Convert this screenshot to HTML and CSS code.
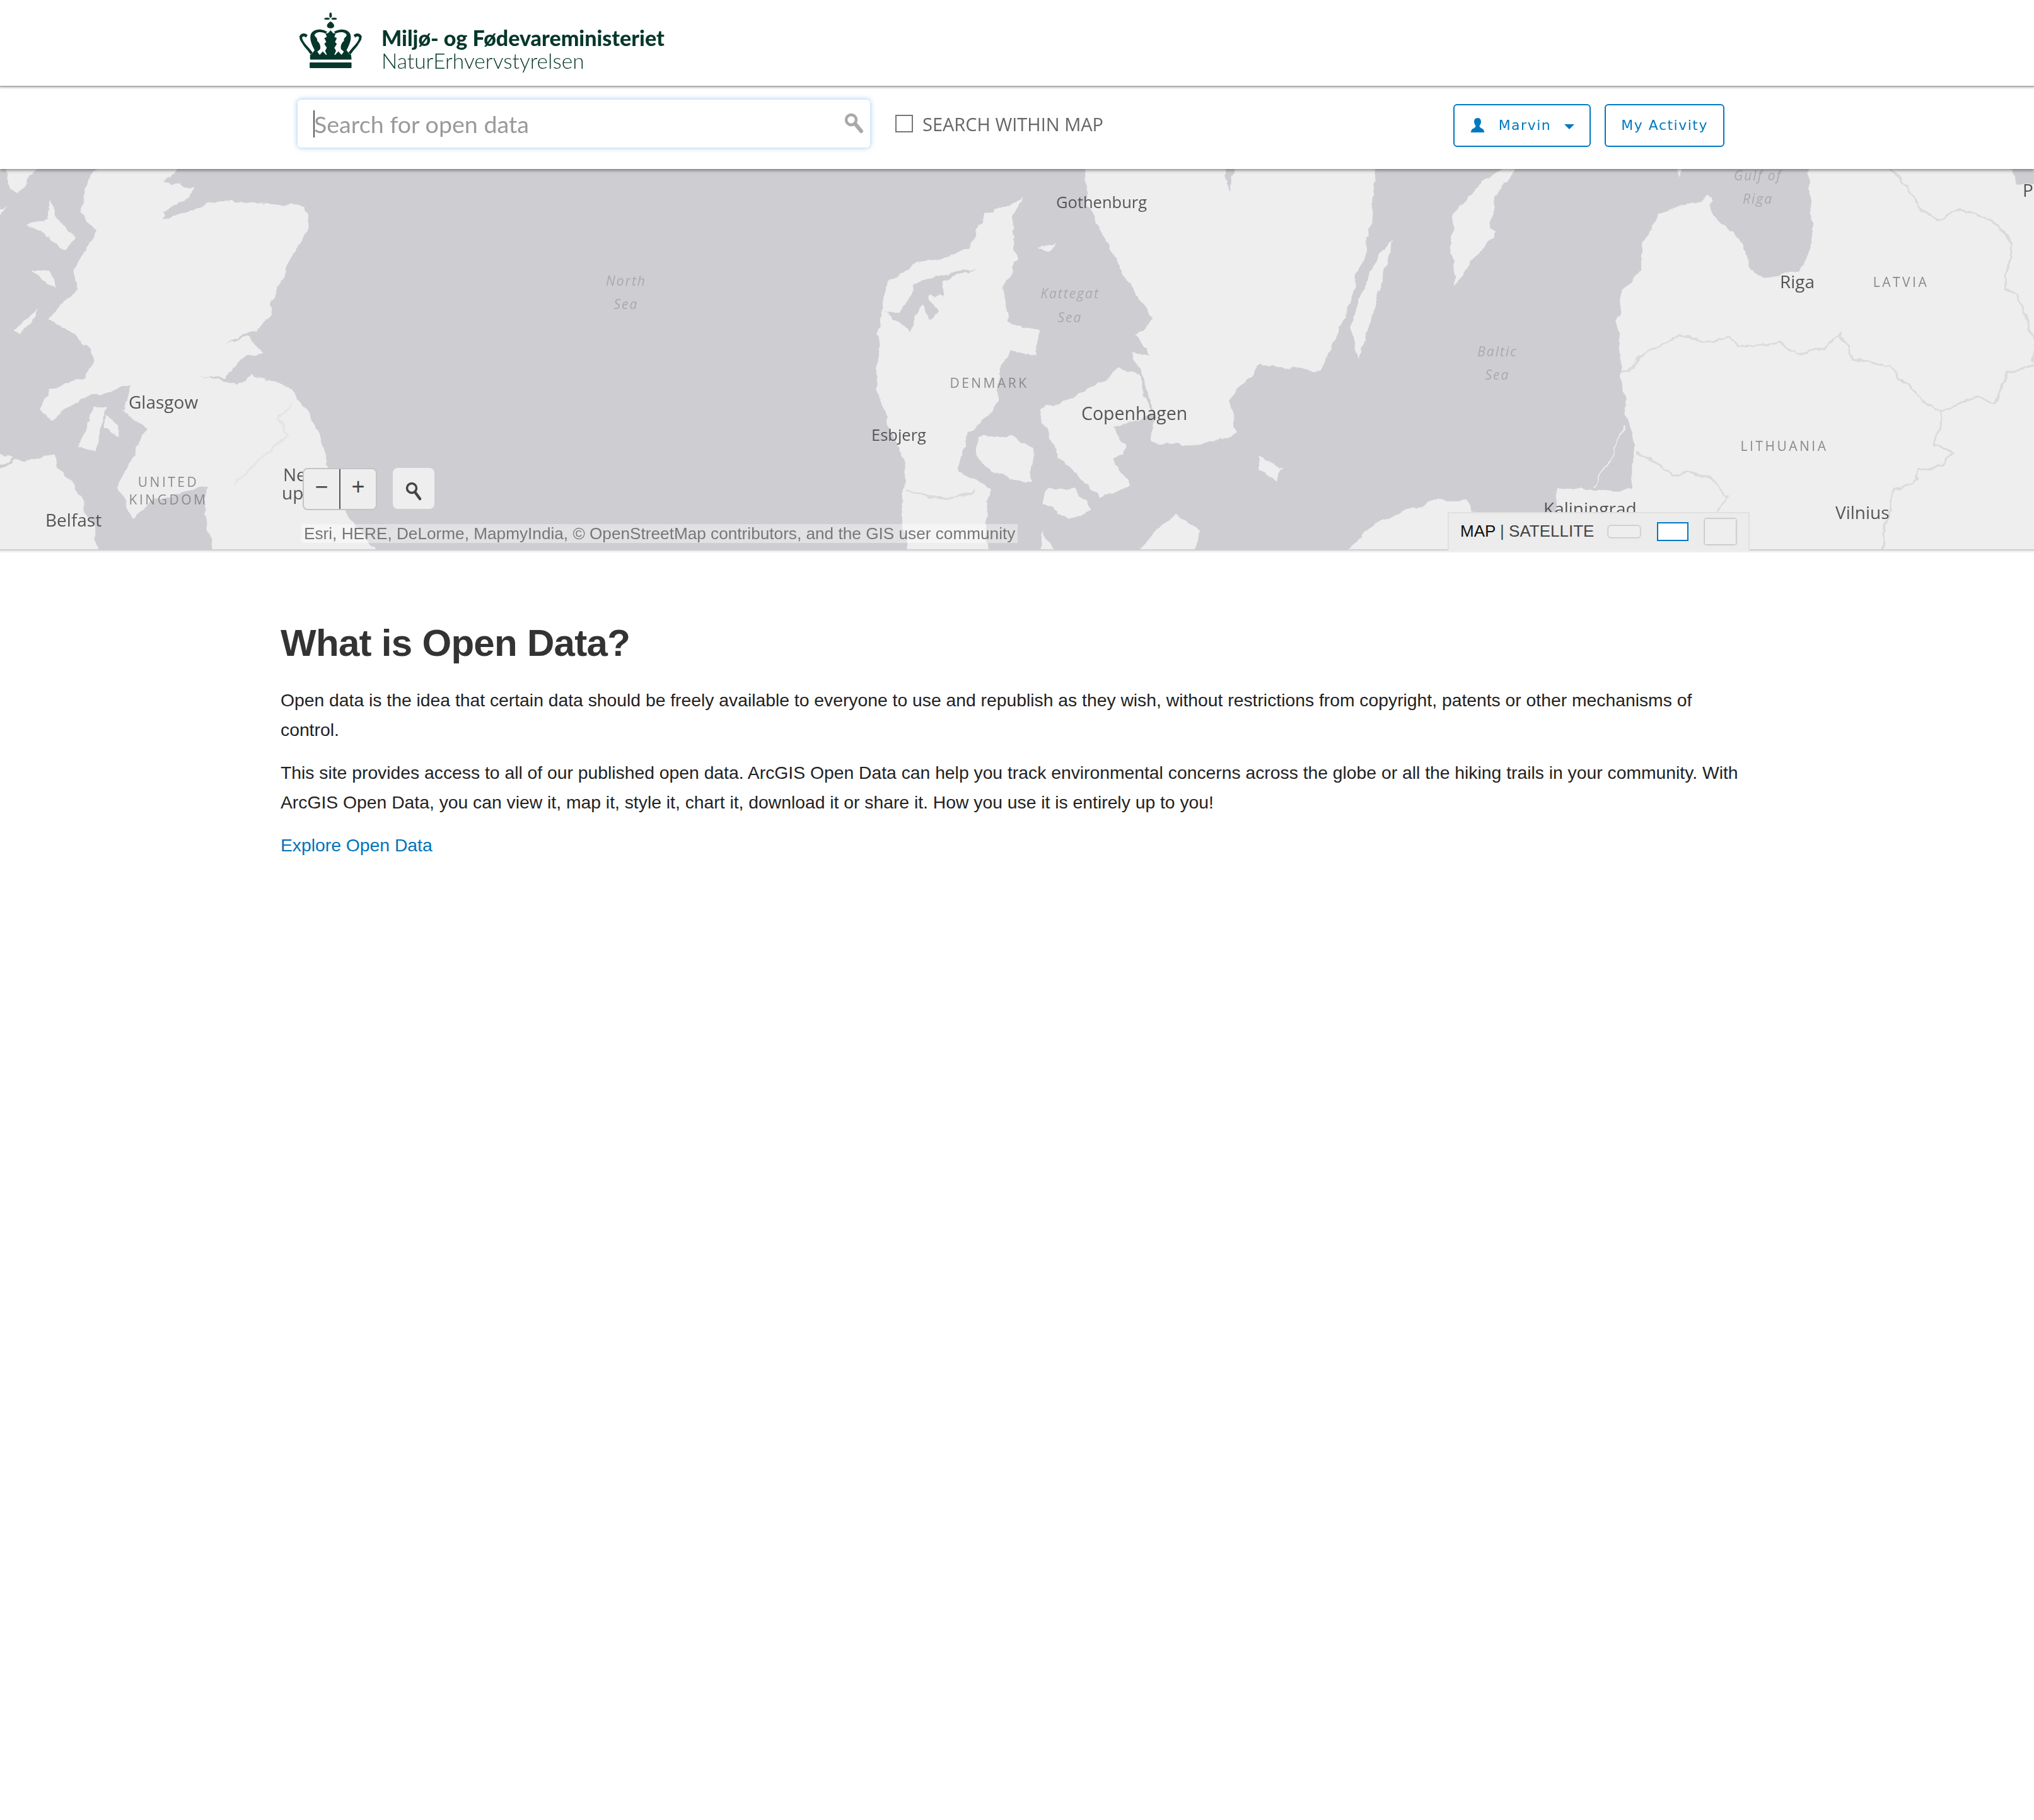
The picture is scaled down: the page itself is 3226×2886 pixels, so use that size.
FILE: index.html
```html
<!DOCTYPE html>
<html>
<head>
    <title>What is Open Data?</title>
    <link rel="stylesheet" href="styles.css">
</head>
<body>
    <header class="brand-bar">
        <svg class="crown" viewBox="72 30 298 265">
            <g class="crown-fill">
                <ellipse cx="222" cy="42" rx="6" ry="13"/>
                <ellipse cx="205" cy="59" rx="13" ry="5"/>
                <ellipse cx="239" cy="59" rx="13" ry="5"/>
                <path d="M222 72 C212 78 204 86 205 94 C206 102 214 105 222 105 C230 105 238 102 239 94 C240 86 232 78 222 72Z"/>
                <path d="M222 114 L234 128 L246 130 L240 146 L252 152 L243 170 L252 180 L240 198 L248 212 L240 232 L204 232 L196 212 L204 198 L192 180 L201 170 L192 152 L204 146 L198 130 L210 128Z"/>
                <rect x="122" y="268" width="200" height="27" rx="4"/>
                <path d="M124 254 L124 232 L320 232 L322 254Z"/>
                <path d="M128 232 L150 205 L170 232Z M316 232 L294 205 L274 232Z M170 232 L185 215 L200 232Z M274 232 L259 215 L244 232Z"/>
                <path d="M128 232 L112 210 L95 190 L76 160 L73 145 C76 130 100 122 112 138 L104 150 C98 142 88 142 86 150 C88 170 112 190 136 220Z"/>
                <path d="M316 232 L332 210 L349 190 L368 160 L371 145 C368 130 344 122 332 138 L340 150 C346 142 356 142 358 150 C356 170 332 190 308 220Z"/>
                <path d="M152 222 C136 190 122 165 126 140 C130 112 170 100 206 122 L198 130 C176 118 150 122 145 138 C150 150 160 150 158 165 C170 175 176 190 172 205Z"/>
                <path d="M292 222 C308 190 322 165 318 140 C314 112 274 100 238 122 L246 130 C268 118 294 122 299 138 C294 150 284 150 286 165 C274 175 268 190 272 205Z"/>
            </g>
        </svg>
        <div class="brand-text">
            <div class="ministry">Miljø- og Fødevareministeriet</div>
            <div class="agency">NaturErhvervstyrelsen</div>
        </div>
    </header>

    <div class="toolbar">
        <div class="search-box">
            <span class="caret"></span>
            <span class="placeholder">Search for open data</span>
            <svg class="search-icon" viewBox="0 0 30 32">
                <circle cx="11" cy="11" r="8" fill="none" stroke="#a9a9a9" stroke-width="4.5"/>
                <path d="M17 17 L27 29" stroke="#a9a9a9" stroke-width="6" stroke-linecap="round"/>
            </svg>
        </div>
        <label class="within-map"><span class="checkbox"></span>SEARCH WITHIN MAP</label>
        <div class="actions">
            <a class="btn btn-user">
                <svg class="user-icon" viewBox="0 0 25 23">
                    <path d="M12.5 0 C8.5 0 7 3 7 6 C7 9 8.5 11 9.5 12.5 C9.5 15 7 16 3.5 18 L1.5 23 L23.5 23 L21.5 18 C18 16 15.5 15 15.5 12.5 C16.5 11 18 9 18 6 C18 3 16.5 0 12.5 0Z" fill="#0079c1"/>
                </svg>
                Marvin
                <span class="down-caret"></span>
            </a>
            <a class="btn">My Activity</a>
        </div>
    </div>

    <section class="map">
        <svg class="basemap" viewBox="0 0 3226 603">
            <defs>
                <filter id="coast" filterUnits="userSpaceOnUse" x="0" y="0" width="3226" height="603">
                    <feTurbulence type="fractalNoise" baseFrequency="0.045" numOctaves="3" seed="7" result="noise"/>
                    <feDisplacementMap in="SourceGraphic" in2="noise" scale="13" xChannelSelector="R" yChannelSelector="G"/>
                    <feGaussianBlur stdDeviation="0.7"/>
                </filter>
            </defs>
            <g filter="url(#coast)">
                <!-- scotland, n. ireland -->
                <g class="land" transform="translate(0,-7) scale(0.7015,0.3954)">
                    <path d="M420 -20 L370 70 L440 90 L430 130 L370 190 L365 220 L410 200 L480 150 L560 150 L690 170 L700 250 L650 400 L615 560 L610 610 L570 670 L510 715 L560 690 L595 750 L540 790 L510 860 L450 840 L540 885 L570 840 L660 900 L700 1010 L730 1120 L740 1200 L790 1420 L880 1600 L490 1600 L460 1400 L470 1290 L350 1340 L300 1420 L265 1290 L300 1170 L330 1060 L280 990 L295 890 L240 910 L170 950 L120 1030 L90 980 L110 900 L190 860 L210 800 L200 740 L160 670 L110 620 L140 560 L180 500 L170 430 L190 350 L215 270 L180 190 L190 120 L200 60 L240 -20Z"/>
                    <path d="M-20 1240 L30 1190 L120 1170 L150 1250 L190 1350 L190 1400 L210 1440 L230 1600 L-20 1600Z"/>
                    <path d="M-20 1150 L30 1180 L-20 1215Z"/>
                    <path d="M20 -20 L100 -20 L40 120 L15 80Z"/>
                    <path d="M110 150 L135 220 L170 300 L150 340 L60 240 L110 220Z"/>
                    <path d="M-20 180 L15 170 L-20 250Z"/>
                    <path d="M75 425 L110 425 L130 490 L100 470Z"/>
                    <path d="M30 660 L90 580 L80 620 L40 680Z"/>
                    <path d="M180 1130 L210 970 L240 980 L215 1150Z"/>
                    <path d="M240 1000 L270 1050 L270 1090 L235 1060Z"/>
                </g>
                <!-- denmark, sweden -->
                <g transform="translate(1100,-7) scale(0.7015,0.3954)">
                    <g class="land">
                        <path d="M745 130 L660 200 L620 330 L560 385 L500 400 L440 470 L420 640 L415 900 L440 1040 L480 1200 L470 1400 L490 1600 L670 1600 L660 1420 L670 1300 L600 1230 L620 1070 L640 1050 L690 950 L690 820 L720 745 L770 770 L785 670 L710 630 L700 500 L730 380 L720 220Z"/>
                        <path d="M640 1090 L720 1090 L770 1130 L760 1280 L680 1240 L640 1170Z"/>
                        <path d="M830 950 L930 870 L960 810 L1005 840 L1020 930 L1040 1000 L950 1060 L980 1130 L950 1190 L990 1280 L920 1340 L820 1160 L780 980Z"/>
                        <path d="M800 1300 L860 1300 L900 1380 L850 1420 L790 1350Z"/>
                        <path d="M890 -20 L1200 -20 L1210 110 L1230 -20 L1510 -20 L1535 180 L1530 280 L1470 620 L1420 830 L1280 800 L1210 950 L1230 1080 L1110 1130 L1035 1110 L1045 1000 L990 750 L1030 760 L1000 680 L1040 620 L1000 520 L940 340 L890 150Z"/>
                        <path d="M1280 1160 L1330 1220 L1320 1270 L1275 1230Z"/>
                        <path d="M780 330 L820 310 L800 350Z"/>
                        <path d="M790 1470 L830 1600 L970 1600 L1090 1400 L1140 1470 L1130 1600 L780 1600Z"/>
                        <path d="M1440 1600 L1568 1430 L1568 1600Z"/>
                    </g>
                    <path class="water" d="M430 590 L470 600 L490 540 L500 480 L550 440 L640 415 L560 465 L565 520 L530 530 L555 590 L530 625 L520 560 L495 610 L495 670 L470 640Z"/>
                    <path class="border" d="M480 1310 L570 1340 L640 1310"/>
                </g>
                <!-- baltic states -->
                <g transform="translate(2126,-7) scale(0.7015,0.3954)">
                    <g class="land">
                        <path d="M1060 -20 L1060 80 L1070 320 L1040 420 L970 460 L920 410 L910 310 L840 200 L835 125 L720 200 L680 320 L680 420 L635 520 L625 650 L635 830 L645 990 L660 1100 L665 1190 L655 1300 L600 1310 L490 1290 L490 1400 L300 1400 L285 1340 L200 1350 L80 1440 L-20 1600 L1600 1600 L1600 80 L1530 80 L1510 -20Z"/>
                        <path d="M330 50 L410 -20 L350 130 L340 250 L355 270 L290 400 L260 485 L250 300 L255 200Z"/>
                        <path d="M120 300 L90 500 L40 780 L20 650 L50 500 L90 350Z"/>
                        <path d="M-20 -20 L80 -20 L70 230 L-20 680Z"/>
                        <path d="M750 -20 L780 -20 L765 55Z"/>
                    </g>
                    <path class="spit" d="M640 1050 C630 1130 600 1220 570 1290"/>
                    <path class="border" d="M635 830 L660 820 L680 760 L765 685 L840 710 L880 695 L900 735 L990 715 L1035 760 L1090 740 L1130 680 L1160 780 L1240 810 L1310 940 L1360 995 L1430 930 L1480 950 L1510 830 L1600 790"/>
                    <path class="border" d="M670 1150 L750 1240 L830 1245 L870 1330 L855 1390"/>
                    <path class="border" d="M1360 995 L1345 1130 L1385 1150 L1360 1210 L1310 1220 L1300 1280 L1250 1300 L1240 1400 L1220 1600"/>
                    <path class="border" d="M1220 -20 L1280 90 L1310 180 L1350 225 L1400 180 L1470 220 L1520 320 L1500 500 L1530 520 L1568 690 L1568 790"/>
                </g>
                <g transform="scale(0.7015,0.3954) translate(0,-18)">
                    <path class="border faint" d="M660 950 L630 1020 L650 1080 L600 1160 L530 1280"/>
                </g>
            </g>

            <text class="city small" x="1675" y="62">Gothenburg</text>
            <text class="city big" x="1715" y="398">Copenhagen</text>
            <text class="city small" x="1382" y="431">Esbjerg</text>
            <text class="city" x="204" y="380">Glasgow</text>
            <text class="city" x="72" y="567">Belfast</text>
            <text class="city" x="2823" y="189">Riga</text>
            <text class="city" x="2911" y="555">Vilnius</text>
            <text class="city" x="2448" y="549">Kaliningrad</text>
            <text class="city" x="3208" y="44">Pa</text>
            <text class="city" x="449" y="495">Ne</text>
            <text class="city" x="447" y="524">up</text>
            <text class="country" x="3015" y="187">LATVIA</text>
            <text class="country" x="2830" y="447">LITHUANIA</text>
            <text class="country" x="1569" y="347">DENMARK</text>
            <text class="country" x="267" y="504">UNITED</text>
            <text class="country" x="267" y="532">KINGDOM</text>
            <text class="sea" x="993" y="185">North</text>
            <text class="sea" x="993" y="222">Sea</text>
            <text class="sea" x="1697" y="205">Kattegat</text>
            <text class="sea" x="1697" y="243">Sea</text>
            <text class="sea" x="2375" y="297">Baltic</text>
            <text class="sea" x="2375" y="334">Sea</text>
            <text class="sea" x="2788" y="18">Gulf of</text>
            <text class="sea" x="2788" y="55">Riga</text>
        </svg>

        <div class="zoom-group">
            <button class="map-btn">−</button>
            <button class="map-btn">+</button>
        </div>
        <button class="locate-btn">
            <svg viewBox="0 0 26 30">
                <circle cx="10" cy="10" r="7.5" fill="none" stroke="#444" stroke-width="3.5"/>
                <path d="M15 16 L23 27" stroke="#444" stroke-width="4.5" stroke-linecap="round"/>
            </svg>
        </button>
        <div class="attribution">Esri, HERE, DeLorme, MapmyIndia, © OpenStreetMap contributors, and the GIS user community</div>

        <div class="layers">
            <span class="layer-text"><span class="layer-active">MAP</span> | SATELLITE</span>
            <span class="thumb thumb-a"></span>
            <span class="thumb thumb-b"></span>
            <span class="thumb thumb-c"></span>
        </div>
    </section>

    <main class="intro">
        <h1>What is Open Data?</h1>
        <p>Open data is the idea that certain data should be freely available to everyone to use and republish as they wish, without restrictions from copyright, patents or other mechanisms of control.</p>
        <p>This site provides access to all of our published open data. ArcGIS Open Data can help you track environmental concerns across the globe or all the hiking trails in your community. With ArcGIS Open Data, you can view it, map it, style it, chart it, download it or share it. How you use it is entirely up to you!</p>
        <p><a href="#">Explore Open Data</a></p>
    </main>
</body>
</html>
```

FILE: styles.css
```css
html {
    background-color: #ffffff;
}

body {
    margin: 0;
    font-family: "Liberation Sans", Arial, sans-serif;
    color: #222222;
    background-color: #ffffff;
}

/* top bar */
.brand-bar {
    position: relative;
    z-index: 3;
    display: flex;
    align-items: flex-start;
    box-sizing: border-box;
    height: 138px;
    padding: 20px 0 0 473px;
    border-bottom: 2px solid #b0b0b0;
    background-color: #ffffff;
    box-shadow: 0 1px 3px rgba(0, 0, 0, 0.25);
}

.crown {
    width: 102px;
    height: 88px;
}

.crown-fill {
    fill: #06372b;
}

.brand-text {
    margin-left: 30px;
    padding-top: 21px;
    color: #06372b;
    font-family: Lato, sans-serif;
}

.ministry {
    font-size: 34px;
    line-height: 38px;
    font-weight: 900;
}

.agency {
    font-size: 33.5px;
    line-height: 34px;
    font-weight: 300;
}

.toolbar {
    position: relative;
    z-index: 2;
    display: flex;
    align-items: center;
    box-sizing: border-box;
    height: 130px;
    padding: 0 491px 14px 472px;
    background-color: #ffffff;
    box-shadow: 0 2px 5px rgba(0, 0, 0, 0.45);
}

.search-box {
    position: relative;
    display: flex;
    align-items: center;
    box-sizing: border-box;
    width: 908px;
    height: 76px;
    padding-left: 25px;
    background-color: #ffffff;
    border-radius: 6px;
    box-shadow: 0 0 9px rgba(102, 175, 233, 0.7);
}

.caret {
    width: 2px;
    height: 43px;
    background-color: #555555;
}

.placeholder {
    margin-left: -1px;
    font-family: Lato, sans-serif;
    font-size: 37.6px;
    color: #9a9a9a;
}

.search-icon {
    position: absolute;
    right: 11px;
    top: 21px;
    width: 30px;
    height: 32px;
}

.within-map {
    display: flex;
    align-items: center;
    margin-left: 40px;
    font-family: "Open Sans", sans-serif;
    font-size: 29px;
    color: #666666;
}

.checkbox {
    box-sizing: border-box;
    width: 28px;
    height: 28px;
    margin-right: 15px;
    border: 2px solid #777777;
}

.actions {
    display: flex;
    gap: 22px;
    margin-top: 5px;
    margin-left: auto;
}

.btn {
    display: flex;
    align-items: center;
    box-sizing: border-box;
    height: 68px;
    padding: 0 24px;
    border: 2px solid #0079c1;
    border-radius: 6px;
    font-family: "DejaVu Sans", sans-serif;
    font-size: 22px;
    letter-spacing: 1.5px;
    color: #0079c1;
}

.user-icon {
    width: 25px;
    height: 23px;
    margin-right: 21px;
}

.down-caret {
    width: 0;
    height: 0;
    margin-left: 21px;
    margin-top: 4px;
    border-left: 8px solid transparent;
    border-right: 8px solid transparent;
    border-top: 8px solid #0079c1;
}

/* map */
.map {
    position: relative;
    height: 605px;
    border-bottom: 3px solid #efefef;
    background-color: #cecdd2;
    overflow: hidden;
}

.basemap {
    display: block;
    width: 3226px;
    height: 603px;
}

.land path {
    fill: #eeeeee;
}

.water {
    fill: #cecdd2;
}

.border {
    fill: none;
    stroke: #dadada;
    stroke-width: 3px;
    vector-effect: non-scaling-stroke;
}

.border.faint {
    stroke: #e4e4e4;
}

.spit {
    fill: none;
    stroke: #eeeeee;
    stroke-width: 2px;
    vector-effect: non-scaling-stroke;
}

.city {
    font-family: "Open Sans", sans-serif;
    font-size: 28px;
    fill: #555555;
}

.city.small {
    font-size: 25.5px;
}

.city.big {
    font-size: 28.5px;
}

.country {
    font-family: "Open Sans", sans-serif;
    font-size: 21px;
    letter-spacing: 3.5px;
    text-anchor: middle;
    fill: #8a8a8a;
}

.sea {
    font-family: "Open Sans", sans-serif;
    font-size: 21px;
    font-style: italic;
    letter-spacing: 2px;
    text-anchor: middle;
    fill: #a9a9ae;
}

.zoom-group {
    position: absolute;
    left: 480px;
    top: 474px;
    display: flex;
    box-sizing: border-box;
    width: 118px;
    height: 67px;
    border: 2px solid #c4c4c4;
    border-radius: 8px;
    background-color: #eeeeee;
}

.map-btn {
    flex: 1;
    padding: 0 0 8px;
    border: 0;
    background: none;
    font-family: "Liberation Sans", sans-serif;
    font-size: 36px;
    color: #444444;
}

.map-btn + .map-btn {
    border-left: 2px solid #555555;
}

.locate-btn {
    position: absolute;
    left: 623px;
    top: 474px;
    width: 66px;
    height: 65px;
    padding: 21px 20px 12px;
    border: 0;
    border-radius: 8px;
    background-color: #eeeeee;
}

.locate-btn svg {
    display: block;
    width: 26px;
    height: 30px;
}

.attribution {
    position: absolute;
    left: 478px;
    top: 563px;
    height: 30px;
    padding: 0 4px;
    background-color: rgba(255, 255, 255, 0.4);
    font-size: 26.2px;
    line-height: 30px;
    color: #777777;
}

.layers {
    position: absolute;
    left: 2296px;
    top: 544px;
    display: flex;
    align-items: center;
    box-sizing: border-box;
    width: 479px;
    height: 62px;
    padding: 0 0 3px 18px;
    border: 2px solid #e0e0e0;
    border-bottom: 0;
    background-color: #ececec;
}

.layer-text {
    width: 235px;
    font-size: 26px;
    color: #444444;
}

.layer-active {
    color: #111111;
}

.thumb {
    box-sizing: border-box;
    flex: none;
}

.thumb-a {
    width: 50px;
    height: 18px;
    border-radius: 4px;
    background-color: #eeeeee;
    box-shadow: 0 0 3px rgba(0, 0, 0, 0.45);
}

.thumb-b {
    width: 50px;
    height: 30px;
    margin-left: 27px;
    border: 2px solid #0079c1;
    background-color: #ffffff;
}

.thumb-c {
    width: 49px;
    height: 40px;
    margin-left: 26px;
    background-color: #eeeeee;
    box-shadow: 0 0 3px rgba(0, 0, 0, 0.45);
}

/* copy */
.intro {
    width: 2322px;
    padding: 111px 0 0 445px;
}

.intro h1 {
    margin: 0 0 34px;
    font-size: 60px;
    line-height: 66px;
    font-weight: 700;
    letter-spacing: -0.7px;
    color: #333333;
}

.intro p {
    margin: 0 0 21px;
    font-size: 28.3px;
    line-height: 47px;
}

.intro a {
    color: #0073ba;
    text-decoration: none;
}
```
